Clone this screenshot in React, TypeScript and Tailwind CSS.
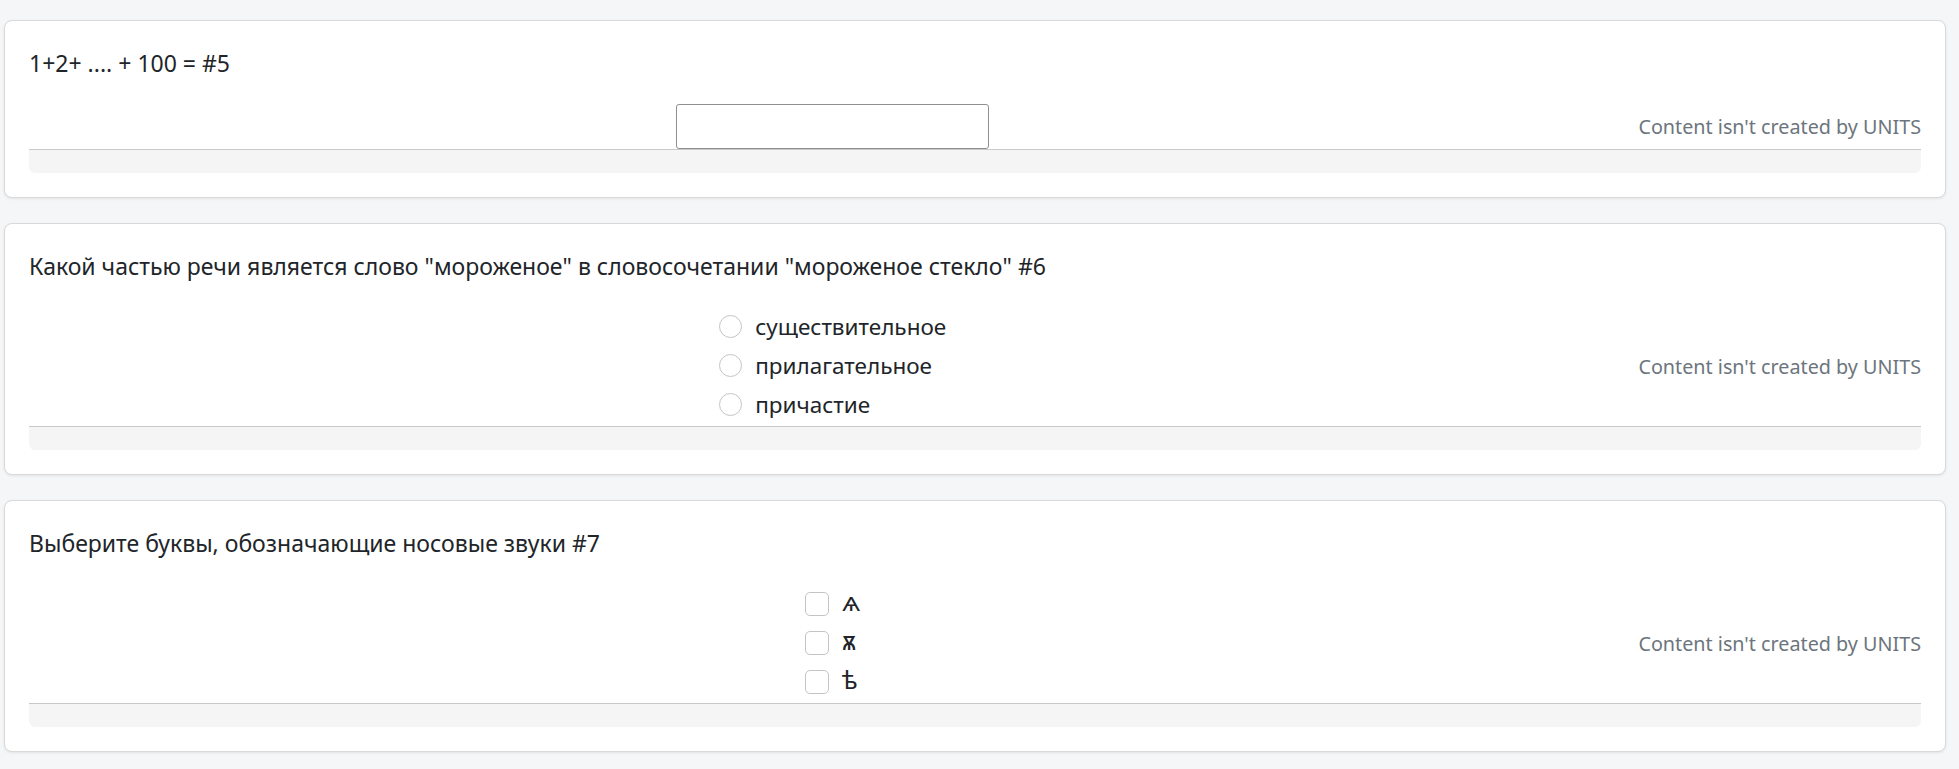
import React from "react";

type Question =
  | { id: number; text: string; kind: "input" }
  | { id: number; text: string; kind: "radio" | "checkbox"; options: string[] };

const questions: Question[] = [
  { id: 5, text: "1+2+ .... + 100 =", kind: "input" },
  {
    id: 6,
    text: 'Какой частью речи является слово "мороженое" в словосочетании "мороженое стекло"',
    kind: "radio",
    options: ["существительное", "прилагательное", "причастие"],
  },
  {
    id: 7,
    text: "Выберите буквы, обозначающие носовые звуки",
    kind: "checkbox",
    options: ["ѧ", "ѫ", "ѣ"],
  },
];

function Answer({ q }: { q: Question }) {
  if (q.kind === "input") {
    return (
      <input
        type="text"
        className="w-[313px] h-[45px] border border-[#8f8f8f] rounded-[3px] bg-white outline-none"
      />
    );
  }

  return (
    <div className="flex flex-col pb-[2px]">
      {q.options.map((opt, i) => (
        <label key={i} className="flex items-center gap-[13px] h-[39px]">
          <span
            className={
              q.kind === "radio"
                ? "w-[23px] h-[23px] rounded-full border border-[#c4c4c4] bg-white"
                : "w-[24px] h-[24px] rounded-[5px] border border-[#c4c4c4] bg-white"
            }
          />
          {q.kind === "radio" ? (
            <span className="text-[22.5px] leading-[39px] text-[#212529]">{opt}</span>
          ) : (
            <span className="text-[24px] leading-[39px] text-[#212529] font-medium font-['DejaVu_Sans']">{opt}</span>
          )}
        </label>
      ))}
    </div>
  );
}

function QuestionCard({ q }: { q: Question }) {
  return (
    <div className="bg-white border border-[#d9d9d9] rounded-[8px] shadow-[0_1px_3px_rgba(0,0,0,0.08)] p-6">
      <p className="text-[23px] leading-[36px] text-[#212529] mb-[23px]">
        {q.text} #{q.id}
      </p>

      <div className="flex items-center">
        <div className="flex-1 flex justify-center">
          <Answer q={q} />
        </div>
        <span className="text-[19.75px] text-[#6c757d] ml-[2px]">Content isn't created by UNITS</span>
      </div>

      <div className="h-[24px] border-t border-[#c8c8c8] bg-[#f5f5f5] rounded-b-[6px]" />
    </div>
  );
}

export default function App() {
  return (
    <div
      className="min-h-screen bg-[#f5f6f8] pl-[4px] pr-[13px] pt-[20px] pb-[20px] flex flex-col gap-[25px]"
      style={{ fontFamily: '"Noto Sans", "DejaVu Sans", sans-serif' }}
    >
      {questions.map((q) => (
        <QuestionCard key={q.id} q={q} />
      ))}
    </div>
  );
}
